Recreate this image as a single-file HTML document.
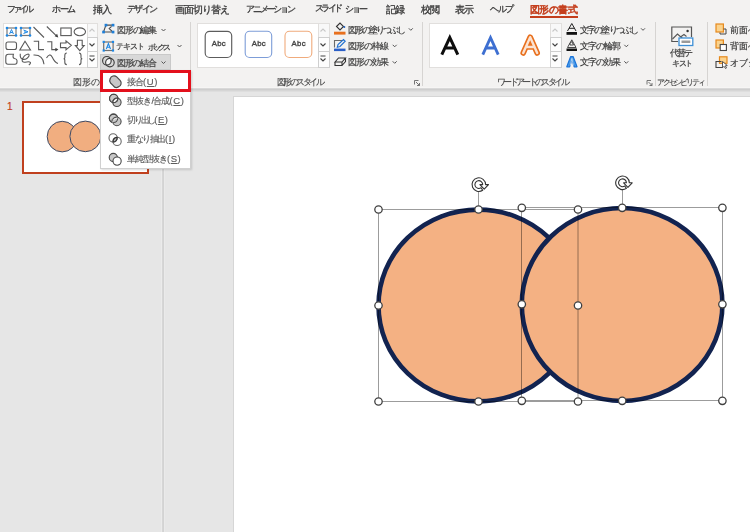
<!DOCTYPE html>
<html lang="ja">
<head>
<meta charset="utf-8">
<style>
html,body{margin:0;padding:0}
body{width:750px;height:532px;overflow:hidden;position:relative;background:#e6e6e6;font-family:"Liberation Sans",sans-serif;color:#444;font-feature-settings:"palt"}
.a{position:absolute}
.t{position:absolute;white-space:nowrap;line-height:1;color:#3b3b3b}
.tab{position:absolute;will-change:transform;top:4px;font-size:9.5px;line-height:12px;white-space:nowrap;color:#3a3a3a;-webkit-text-stroke-width:0.3px}
.rt{position:absolute;will-change:transform;font-size:9px;line-height:10px;white-space:nowrap;color:#3a3a3a;-webkit-text-stroke-width:0.18px}
.gl{position:absolute;will-change:transform;top:78px;font-size:8.5px;line-height:10px;white-space:nowrap;color:#444;-webkit-text-stroke-width:0.1px}
.sep{position:absolute;top:22px;width:1px;height:64px;background:#d6d4d2}
.gal{position:absolute;background:#fff;border:1px solid #e1dfdd}
.sb{position:absolute;background:#f8f8f8;border:1px solid #e1dfdd}
.mi{position:absolute;will-change:transform;left:127px;font-size:9px;line-height:10px;white-space:nowrap;color:#5c5c5c;-webkit-text-stroke-width:0.15px}
.p{letter-spacing:0.6px;font-size:9.5px}
</style>
</head>
<body>
<!-- ribbon background -->
<div class="a" style="left:0;top:0;width:750px;height:87px;background:#f3f2f1"></div>
<div class="a" style="left:0;top:87px;width:750px;height:1px;background:#f6f5f4"></div>
<div class="a" style="left:0;top:88px;width:750px;height:1px;background:#d9d9d9"></div>
<div class="a" style="left:0;top:89px;width:750px;height:1px;background:#cecece"></div>
<div class="a" style="left:0;top:90px;width:750px;height:1px;background:#d6d6d6"></div>
<div class="a" style="left:0;top:91px;width:750px;height:1px;background:#dedede"></div>

<!-- tabs -->
<div class="tab" id="t1" style="left:7.1px;top:2.7px;letter-spacing:-3px;font-size:8.8px">ファイル</div>
<div class="tab" id="t2" style="left:51.9px;top:3.2px;letter-spacing:-1.45px;font-size:8.8px">ホーム</div>
<div class="tab" id="t3" style="left:92.5px;top:4px;letter-spacing:-1px">挿入</div>
<div class="tab" id="t4" style="left:126.71px;top:2.7px;letter-spacing:-1.68px;font-size:8.8px">デザイン</div>
<div class="tab" id="t5" style="left:175.21px;top:4px;letter-spacing:-1.08px">画面切り替え</div>
<div class="tab" id="t6" style="left:245.6px;top:3.2px;letter-spacing:-2.21px;font-size:8.8px">アニメーション</div>
<div class="tab" id="t7" style="left:315.21px;top:2px;letter-spacing:-2.58px;font-size:8.8px">スライド</div>
<div class="tab" id="t7b" style="left:344.61px;top:3px;letter-spacing:-2.1px;font-size:8.8px">ショー</div>
<div class="tab" id="t8" style="left:386.41px;top:4px;letter-spacing:-1px">記録</div>
<div class="tab" id="t9" style="left:420.61px;top:4px;letter-spacing:-1.4px">校閲</div>
<div class="tab" id="t10" style="left:454.8px;top:4px;letter-spacing:-1px">表示</div>
<div class="tab" id="t11" style="left:489.5px;top:3.4px;letter-spacing:-1.35px;font-size:8.8px">ヘルプ</div>
<div class="tab" id="t12" style="left:530px;top:3.5px;letter-spacing:-0.62px;color:#c43e1c;-webkit-text-stroke-width:0.55px">図形の書式</div>
<div class="a" style="left:530px;top:16px;width:48px;height:2px;background:#c43e1c"></div>


<!-- group 1: shapes gallery -->
<div class="gal" style="left:3px;top:23px;width:84px;height:43px"></div>
<div class="sb" style="left:87px;top:23px;width:9px;height:13px"></div>
<div class="sb" style="left:87px;top:37px;width:9px;height:13px;background:#fdfdfd;border-color:#cfcfcf"></div>
<div class="sb" style="left:87px;top:51px;width:9px;height:15px;background:#fdfdfd;border-color:#cfcfcf"></div>
<svg class="a" style="left:0;top:0" width="100" height="70" fill="none" stroke="#5a5a5a" stroke-width="1.1">
  <path d="M89.5 31.5 L92 29 L94.5 31.5" stroke="#c8c8c8"/>
  <path d="M89.5 43.5 L92 46 L94.5 43.5" stroke="#444"/>
  <path d="M89.5 56 H94.5 M89.5 58.5 L92 61 L94.5 58.5" stroke="#444"/>
  <!-- row1 -->
  <rect x="7" y="28" width="9" height="7.5" stroke="#7a7a7a" stroke-width="1.2"/>
  <g fill="#1e88e5" stroke="none"><circle cx="7" cy="28" r="1.3"/><circle cx="16" cy="28" r="1.3"/><circle cx="7" cy="35.5" r="1.3"/><circle cx="16" cy="35.5" r="1.3"/></g>
  <path d="M9.6 34 L11.5 29.5 L13.4 34 M10.3 32.5 H12.7" stroke="#1e88e5" stroke-width="1"/>
  <rect x="21" y="28" width="9" height="7.5" stroke="#7a7a7a" stroke-width="1.2"/>
  <g fill="#1e88e5" stroke="none"><circle cx="21" cy="28" r="1.3"/><circle cx="30" cy="28" r="1.3"/><circle cx="21" cy="35.5" r="1.3"/><circle cx="30" cy="35.5" r="1.3"/></g>
  <path d="M23.5 30 L28 31.8 L23.5 33.5 M25 30.6 V33" stroke="#1e88e5" stroke-width="1"/>
  <path d="M33.5 27 L44 37.5"/>
  <path d="M46.8 26.5 L57.5 36.8"/><path d="M58.3 37.4 L54.6 36.2 L57.1 33.7 Z" fill="#444" stroke="none"/>
  <rect x="60.8" y="28" width="10.4" height="7.6"/>
  <ellipse cx="79.8" cy="31.8" rx="5.7" ry="3.9"/>
  <!-- row2 -->
  <rect x="6" y="42" width="10.5" height="7.5" rx="2"/>
  <path d="M25 41.2 L30.5 50 H19.8 Z"/>
  <path d="M33.7 41.3 H38.6 V49.6 H44"/>
  <path d="M47.2 41.8 H51.8 V49.6 H56.5"/><path d="M58.4 49.6 L55.4 47.8 V51.4 Z" fill="#444" stroke="none"/>
  <path d="M60.5 43 H66 V40.9 L71.3 45.3 L66 49.8 V47.6 H60.5 Z"/>
  <path d="M77.4 40.2 H82.2 V45.6 H84.2 L79.8 50.6 L75.4 45.6 H77.4 Z"/>
  <!-- row3 -->
  <path d="M13.4 54.3 H8.5 Q5.8 54.3 5.8 57 V62 Q5.8 64.2 8 64.2 H15 Q17 64.2 17 62 V60.5 Q17 59 14.5 58.5 Q12.3 57.8 13.4 54.3 Z"/>
  <path d="M20.3 53.8 Q19.8 58 22.3 59.3 Q27 60 29 56 Q29.5 53.8 27.5 54.2 Q24 55 22.3 59.3 Q21.5 62.5 25 62.2 Q29.5 61 30.5 62.5 Q30.8 63.8 28.8 65"/>
  <path d="M33.5 55 Q43 54.5 44 64.2"/>
  <path d="M46.5 58 Q49.8 52.2 52.3 57.3 Q54.8 62.8 58 63.5"/>
  <path d="M66.8 53 Q64.8 53 64.8 55.5 V57.8 Q64.8 58.8 63.6 58.8 Q64.8 58.8 64.8 59.8 V62.3 Q64.8 64.6 66.8 64.6"/>
  <path d="M79 53 Q81 53 81 55.5 V57.8 Q81 58.8 82.3 58.8 Q81 58.8 81 59.8 V62.3 Q81 64.6 79 64.6"/>
</svg>

<!-- group 1: edit / textbox / merge -->
<div class="a" style="left:100px;top:54px;width:71px;height:16px;background:#d8d8d8;border:1px solid #c9c9c9;box-sizing:border-box"></div>
<svg class="a" style="left:98px;top:20px" width="92" height="50" fill="none">
  <path d="M7.9 5.1 H15 M7.9 5.1 L5.5 12 H15 M13.6 6.4 L11.2 8.6 L13.8 11" stroke="#4a4a4a" stroke-width="1.1"/>
  <g fill="#1e7fd8"><rect x="6.6" y="3.8" width="2.7" height="2.7"/><rect x="13.7" y="3.8" width="2.7" height="2.7"/><rect x="4.2" y="10.7" width="2.7" height="2.7"/><rect x="13.7" y="10.7" width="2.7" height="2.7"/></g>
  <rect x="5.7" y="22" width="9.4" height="8.5" stroke="#6f6f6f" stroke-width="1.2"/>
  <g fill="#1e88e5"><rect x="4.6" y="20.8" width="2.2" height="2.2"/><rect x="13.9" y="20.8" width="2.2" height="2.2"/><rect x="4.6" y="29.4" width="2.2" height="2.2"/><rect x="13.9" y="29.4" width="2.2" height="2.2"/></g>
  <path d="M8.3 29 L10.4 23.6 L12.5 29 M9.1 27.2 H11.7" stroke="#1e88e5" stroke-width="1.1"/>
  <path d="M12.5 38.6 A4.3 4.3 0 0 0 8.2 44.6 A4.3 4.3 0 0 0 12.5 38.6 Z" fill="#f7f7f7"/>
  <circle cx="8.9" cy="40.8" r="4.3" stroke="#3d3d3d" stroke-width="1.15"/>
  <circle cx="11.9" cy="42.6" r="4.3" stroke="#3d3d3d" stroke-width="1.15"/>
  <path d="M63.5 9 L65.5 11 L67.5 9" stroke="#555" stroke-width="1"/>
  <path d="M79.5 25 L81.5 27 L83.5 25" stroke="#555" stroke-width="1"/>
  <path d="M63.5 41.5 L65.5 43.5 L67.5 41.5" stroke="#555" stroke-width="1"/>
</svg>
<div class="rt" id="r_edit" style="left:116.71px;top:24.9px;letter-spacing:-1.2px">図形の編集</div>
<div class="rt" id="r_tb" style="left:116px;top:41.21px;letter-spacing:-1.05px;font-size:8.3px">テキスト</div>
<div class="rt" id="r_tb2" style="left:147.5px;top:41.71px;letter-spacing:-3.14px;font-size:8.3px">ボックス</div>
<div class="rt" id="r_merge" style="left:116.71px;top:57.5px;letter-spacing:-1.26px">図形の結合</div>

<!-- group 2: shape styles -->
<div class="gal" style="left:197px;top:23px;width:121px;height:43px"></div>
<div class="sb" style="left:318px;top:23px;width:10px;height:13px"></div>
<div class="sb" style="left:318px;top:37px;width:10px;height:13px;background:#fdfdfd;border-color:#cfcfcf"></div>
<div class="sb" style="left:318px;top:51px;width:10px;height:15px;background:#fdfdfd;border-color:#cfcfcf"></div>
<svg class="a" style="left:190px;top:0" width="240" height="90" fill="none">
  <path d="M130.5 31.5 L133 29 L135.5 31.5" stroke="#c8c8c8" stroke-width="1.1"/>
  <path d="M130.5 43.5 L133 46 L135.5 43.5" stroke="#444" stroke-width="1.1"/>
  <path d="M130.5 56 H135.5 M130.5 58.5 L133 61 L135.5 58.5" stroke="#444" stroke-width="1.1"/>
  <rect x="15.2" y="31.3" width="26.5" height="26.2" rx="4.5" stroke="#5c5c5c" stroke-width="1.15"/>
  <rect x="55.2" y="31.3" width="26.5" height="26.2" rx="4.5" stroke="#7d9dd8" stroke-width="1.1"/>
  <rect x="95" y="31.3" width="26.8" height="26.2" rx="4.5" stroke="#f0ab7c" stroke-width="1.1"/>
  <g fill="#444" stroke="#444" stroke-width="0.35" font-size="7.8" letter-spacing="0.3" font-family="Liberation Sans" text-anchor="middle">
    <text x="28.8" y="46.4">Abc</text><text x="68.8" y="46.4">Abc</text><text x="108.7" y="46.4">Abc</text>
  </g>
  <!-- fill icon -->
  <path d="M146.5 26.5 L150 23 L153.5 26.5 L150 30 Z" stroke="#333" stroke-width="1.1"/>
  <circle cx="154.3" cy="27" r="1" fill="#1e5fbf"/>
  <rect x="144" y="31.7" width="11.5" height="2.9" fill="#e8701e"/>
  <!-- outline icon -->
  <path d="M153 40.5 H144.5 V47.5" stroke="#6a6a6a" stroke-width="1.1"/>
  <path d="M147.3 47.2 L148 44.5 L153.5 39.5 L155.2 41.2 L150 46.5 Z" stroke="#1e6fd0" stroke-width="1.1"/>
  <rect x="144" y="48.6" width="11.5" height="2.5" fill="#2b5fc7"/>
  <!-- effect icon -->
  <path d="M145 62 L148.5 58 H155.5 L152 62 Z M145 62 V65.5 H152 V62 M152 65.5 L155.5 61.5 V58" stroke="#333" stroke-width="1.1"/>
  <path d="M218.8 28.3 L220.8 30.3 L222.8 28.3" stroke="#555" stroke-width="1"/>
  <path d="M202.7 44.8 L204.7 46.8 L206.7 44.8" stroke="#555" stroke-width="1"/>
  <path d="M202.7 61.3 L204.7 63.3 L206.7 61.3" stroke="#555" stroke-width="1"/>
  <!-- dialog launcher -->
  <path d="M224.5 84.5 V80.5 H228.5 M226 82 L229.5 85.5 M227 85.5 H229.5 V83" stroke="#666" stroke-width="0.9"/>
</svg>
<div class="rt" id="r_fill" style="left:348.21px;top:24.71px;letter-spacing:-1.93px">図形の塗りつぶし</div>
<div class="rt" id="r_line" style="left:348px;top:41px;letter-spacing:-1.1px">図形の枠線</div>
<div class="rt" id="r_eff" style="left:348px;top:57.3px;letter-spacing:-1px">図形の効果</div>

<!-- group 3: wordart -->
<div class="gal" style="left:429px;top:23px;width:121px;height:43px"></div>
<div class="sb" style="left:550px;top:23px;width:10px;height:13px"></div>
<div class="sb" style="left:550px;top:37px;width:10px;height:13px;background:#fdfdfd;border-color:#cfcfcf"></div>
<div class="sb" style="left:550px;top:51px;width:10px;height:15px;background:#fdfdfd;border-color:#cfcfcf"></div>
<svg class="a" style="left:420px;top:0" width="240" height="90" fill="none">
  <path d="M132.5 31.5 L135 29 L137.5 31.5" stroke="#c8c8c8" stroke-width="1.1"/>
  <path d="M132.5 43.5 L135 46 L137.5 43.5" stroke="#444" stroke-width="1.1"/>
  <path d="M132.5 56 H137.5 M132.5 58.5 L135 61 L137.5 58.5" stroke="#444" stroke-width="1.1"/>
  <path d="M21.8 54.6 L29.8 37.6 L37.8 54.6 M24.8 48 H34.8" stroke="#0d0d0d" stroke-width="3" stroke-miterlimit="10"/>
  <path d="M62.8 54.6 L70.5 37.6 L78.2 54.6 M65.8 48 H75.2" stroke="#3d6fd1" stroke-width="2.8" stroke-miterlimit="10"/>
  <path d="M103.2 53 L110.2 37.2 L117.2 53 M106 47 H114.4" stroke="#e8701e" stroke-width="5.6" stroke-linejoin="round" stroke-linecap="round"/>
  <path d="M103.2 53 L110.2 37.2 L117.2 53 M106 47 H114.4" stroke="#fbe3d2" stroke-width="2.4" stroke-linejoin="round" stroke-linecap="round"/>
  <!-- text fill icons -->
  <path d="M147.5 31 L151.8 23.5 L156 31 M149 28.3 H154.5" stroke="#222" stroke-width="1"/>
  <rect x="146.5" y="32" width="10.5" height="2.8" fill="#111"/>
  <path d="M147.5 47.5 L151.8 39.8 L156 47.5 Z M150 43.5 L151.8 41.5 L153.5 45 H150 Z" stroke="#333" stroke-width="0.9"/>
  <rect x="146.5" y="48.5" width="10.5" height="2.5" fill="#111"/>
  <path d="M146.8 66.8 L150.6 56.6 H153.2 L157 66.8 H154.2 L151.9 60 L149.6 66.8 Z" stroke="#1a73d9" stroke-width="1.2" fill="#4a9be8" stroke-linejoin="round"/>
  <path d="M151.9 58.5 L150.3 65.5 M151.9 58.5 L153.5 65.5" stroke="#d8ecfb" stroke-width="0.7"/>
  <path d="M221 28.3 L223 30.3 L225 28.3" stroke="#555" stroke-width="1"/>
  <path d="M204.3 44.8 L206.3 46.8 L208.3 44.8" stroke="#555" stroke-width="1"/>
  <path d="M204.3 61.3 L206.3 63.3 L208.3 61.3" stroke="#555" stroke-width="1"/>
  <path d="M227 84.5 V80.5 H231 M228.5 82 L232 85.5 M229.5 85.5 H232 V83" stroke="#666" stroke-width="0.9"/>
</svg>
<div class="rt" id="r_tfill" style="left:580.21px;top:24.71px;letter-spacing:-1.86px">文字の塗りつぶし</div>
<div class="rt" id="r_tline" style="left:580px;top:41px;letter-spacing:-1px">文字の輪郭</div>
<div class="rt" id="r_teff" style="left:580px;top:57.3px;letter-spacing:-1px">文字の効果</div>

<!-- group 4: accessibility -->
<svg class="a" style="left:660px;top:20px" width="90" height="52" fill="none">
  <path d="M18 21.5 H11.8 V7 H31.5 V17" stroke="#555" stroke-width="1.2"/>
  <path d="M12.5 19 L17.5 14 L22.5 18.5 M20.5 17 L24 14.5 L26.5 16.5" stroke="#555" stroke-width="1.1"/>
  <circle cx="27.6" cy="11" r="1.2" fill="#333"/>
  <rect x="19" y="18" width="13.8" height="7.5" stroke="#3d8fd6" stroke-width="1.3" fill="#fff"/>
  <rect x="21.5" y="20.5" width="8.8" height="2.5" fill="#9a9a9a"/>
  <!-- arrange -->
  <rect x="56" y="4" width="7.4" height="8" fill="#fbd38d" stroke="#e6891c" stroke-width="1.2"/>
  <path d="M63.5 9 H66 V14 H60 V12.5" stroke="#444" stroke-width="1"/>
  <rect x="56" y="20" width="7.4" height="8" fill="#fbd38d" stroke="#e6891c" stroke-width="1.2"/>
  <rect x="60.2" y="24.5" width="6.2" height="6" fill="#fff" stroke="#444" stroke-width="1.1"/>
  <rect x="59.5" y="36.8" width="7.5" height="6.5" fill="#fbd38d" stroke="#e6891c" stroke-width="1.2"/>
  <path d="M62.5 47.5 H56 V41.5 H61.5" stroke="#444" stroke-width="1.1"/>
  <path d="M62.5 41.5 L62.5 47.8 L64 46.3 L65.5 48.5 L66.5 48 L65.3 45.8 L67.3 45.5 Z" fill="#fff" stroke="#333" stroke-width="0.8"/>
</svg>
<div class="rt" id="r_alt1" style="left:669.6px;top:48.3px;letter-spacing:-2px">代替テ</div>
<div class="rt" id="r_alt2" style="left:672px;top:58px;letter-spacing:-1.5px;font-size:8.3px">キスト</div>
<div class="rt" id="r_fwd" style="left:729.6px;top:25.21px;letter-spacing:0px">前面へ移動</div>
<div class="rt" id="r_bwd" style="left:729.6px;top:41.4px;letter-spacing:0px">背面へ移動</div>
<div class="rt" id="r_obj" style="left:729.6px;top:57.6px;letter-spacing:0px">オブジェクトの選択と表示</div>

<!-- group separators -->
<div class="sep" style="left:190px"></div>
<div class="sep" style="left:422px"></div>
<div class="sep" style="left:655px"></div>
<div class="sep" style="left:707px"></div>

<!-- group labels -->
<div class="gl" id="g1" style="left:73px;top:76.5px;letter-spacing:0px">図形の挿入</div>
<div class="gl" id="g2" style="left:277px;top:77px;letter-spacing:-2.53px">図形のスタイル</div>
<div class="gl" id="g3" style="left:496.5px;top:77px;letter-spacing:-2.65px">ワードアートのスタイル</div>
<div class="gl" id="g4" style="left:657.41px;top:77px;letter-spacing:-2.17px;font-size:8.3px">アクセシビリティ</div>

<!-- slide pane -->
<div class="a" style="left:161px;top:92px;width:1px;height:440px;background:#ebebeb"></div>
<div class="a" style="left:162px;top:92px;width:1px;height:440px;background:#d6d6d6"></div>
<div class="a" style="left:163px;top:92px;width:1px;height:440px;background:#d3d3d3"></div>
<div class="a" style="left:164px;top:92px;width:1px;height:440px;background:#eaeaea"></div>
<div class="a" style="left:233px;top:96px;width:517px;height:436px;background:#d6d6d6"></div>
<div class="a" style="left:234px;top:97px;width:516px;height:435px;background:#fff"></div>

<!-- thumbnail -->
<div class="a" style="left:7px;top:102px;font-size:10px;line-height:10px;color:#c43e1c;-webkit-text-stroke-width:0.2px">1</div>
<div class="a" style="left:22px;top:101px;width:123px;height:69px;border:2px solid #c0401e;background:#fff"></div>
<svg class="a" style="left:22px;top:101px" width="128" height="74">
  <ellipse cx="40.2" cy="35.6" rx="15" ry="15.3" fill="#f1ae80" stroke="#3c4a66" stroke-width="1"/>
  <ellipse cx="63.4" cy="35.4" rx="15.5" ry="15.3" fill="#f1ae80" stroke="#3c4a66" stroke-width="1"/>
</svg>

<!-- main shapes -->
<svg class="a" style="left:0;top:0" width="750" height="532">
  <ellipse cx="478.3" cy="305.5" rx="99.8" ry="95.9" fill="#f4b183" stroke="#122350" stroke-width="4.6"/>
  <ellipse cx="622.1" cy="304.5" rx="100.3" ry="96.5" fill="#f4b183" stroke="#122350" stroke-width="4.6"/>
  <g fill="none" stroke="#9c9c9c" stroke-width="1" style="mix-blend-mode:multiply">
    <rect x="378.5" y="209.5" width="199.5" height="192"/>
    <rect x="521.5" y="207.5" width="201" height="193"/>
    <line x1="478.5" y1="192" x2="478.5" y2="209.5"/>
    <line x1="622.5" y1="190" x2="622.5" y2="207.5"/>
  </g>
  <g fill="#fff" stroke="#333" stroke-width="1.1" stroke-linejoin="round">
    <path d="M482.7 190.2 A6.8 6.8 0 1 1 485.6 184.6 L488.5 184.6 L484.2 189.2 L479.9 184.6 L482.7 184.6 A3.9 3.9 0 1 0 481.0 187.8 Z"/>
    <path d="M626.4 188.4 A6.8 6.8 0 1 1 629.3 182.8 L632.2 182.8 L627.9 187.4 L623.6 182.8 L626.4 182.8 A3.9 3.9 0 1 0 624.7 186.0 Z"/>
  </g>

  <g fill="#fff" stroke="#404040" stroke-width="1.3">
    <circle cx="378.5" cy="209.5" r="3.7"/><circle cx="478.5" cy="209.5" r="3.7"/><circle cx="578" cy="209.5" r="3.7"/>
    <circle cx="378.5" cy="305.5" r="3.7"/><circle cx="578" cy="305.5" r="3.7"/>
    <circle cx="378.5" cy="401.5" r="3.7"/><circle cx="478.5" cy="401.5" r="3.7"/><circle cx="578" cy="401.5" r="3.7"/>
    <circle cx="521.8" cy="207.8" r="3.7"/><circle cx="622.2" cy="207.8" r="3.7"/><circle cx="722.4" cy="207.8" r="3.7"/>
    <circle cx="521.8" cy="304.3" r="3.7"/><circle cx="722.4" cy="304.3" r="3.7"/>
    <circle cx="521.8" cy="400.8" r="3.7"/><circle cx="622.2" cy="400.8" r="3.7"/><circle cx="722.4" cy="400.8" r="3.7"/>
  </g>
</svg>

<!-- dropdown menu -->
<div class="a" style="left:100px;top:70px;width:91px;height:99px;background:#fff;border:1px solid #d0d0d0;box-sizing:border-box;box-shadow:1px 1px 2px rgba(0,0,0,0.15)"></div>
<div class="a" style="left:100px;top:70px;width:91px;height:22px;border:3px solid #e3101c;box-sizing:border-box"></div>

<svg class="a" style="left:100px;top:70px" width="30" height="100" stroke="#4a4a4a" stroke-width="1.1">
  <g transform="translate(-100,-70)">
    <path d="M110.2 78.6 A4 4 0 0 1 116.7 76.9 L120.1 80.4 A4 4 0 0 1 118.4 86.9 A4 4 0 0 1 113.2 85.6 L110.6 83 A4 4 0 0 1 110.2 78.6 Z" fill="#c8c8c8" stroke-width="1.2"/>
    <circle cx="113.7" cy="98.5" r="4.2" fill="#c8c8c8"/>
    <circle cx="116.9" cy="102.3" r="4.2" fill="#c8c8c8"/>
    <path d="M117.8 98.4 A4.2 4.2 0 0 0 112.8 102.5 A4.2 4.2 0 0 0 117.8 98.4 Z" fill="#fff" stroke="#4a4a4a"/>
    <circle cx="113.7" cy="98.5" r="4.2" fill="none"/>
    <circle cx="113.5" cy="118.3" r="4.2" fill="#c8c8c8"/>
    <circle cx="116.9" cy="121.5" r="4.2" fill="#c8c8c8"/>
    <circle cx="113.5" cy="118.3" r="4.2" fill="none"/>
    <path d="M117.6 118 A4.2 4.2 0 0 0 112.8 122.4" fill="none" stroke="#fff" stroke-width="0.9"/>
    <path d="M116.5 117.2 A4.2 4.2 0 0 0 111.8 121.4" fill="none" stroke="#4a4a4a" stroke-width="0.9"/>
    <circle cx="113.1" cy="137.9" r="4.1" fill="none" stroke="#6a6a6a"/>
    <circle cx="117.1" cy="141.4" r="4.1" fill="none" stroke="#6a6a6a"/>
    <path d="M117.1 137.3 A4.1 4.1 0 0 0 113.1 142 A4.1 4.1 0 0 0 117.1 137.3 Z" fill="#bdbdbd" stroke="#333" stroke-width="1.2"/>
    <circle cx="113.3" cy="157.5" r="4.1" fill="#c8c8c8"/>
    <circle cx="117.1" cy="161.1" r="4.1" fill="#fff"/>
  </g>
</svg>
<div class="mi" id="m1" style="left:127.1px;top:76.6px;letter-spacing:-1px">接合<span class="p">(<u>U</u>)</span></div>
<div class="mi" id="m2" style="left:126.8px;top:96.1px;letter-spacing:-0.83px">型抜き/合成<span class="p">(<u>C</u>)</span></div>
<div class="mi" id="m3" style="left:126.8px;top:115.3px;letter-spacing:-2.22px">切り出し<span class="p">(<u>E</u>)</span></div>
<div class="mi" id="m4" style="left:126.8px;top:134.4px;letter-spacing:-1.4px">重なり抽出<span class="p">(<u>I</u>)</span></div>
<div class="mi" id="m5" style="left:126.8px;top:154px;letter-spacing:-1.02px">単純型抜き<span class="p">(<u>S</u>)</span></div>

</body>
</html>
